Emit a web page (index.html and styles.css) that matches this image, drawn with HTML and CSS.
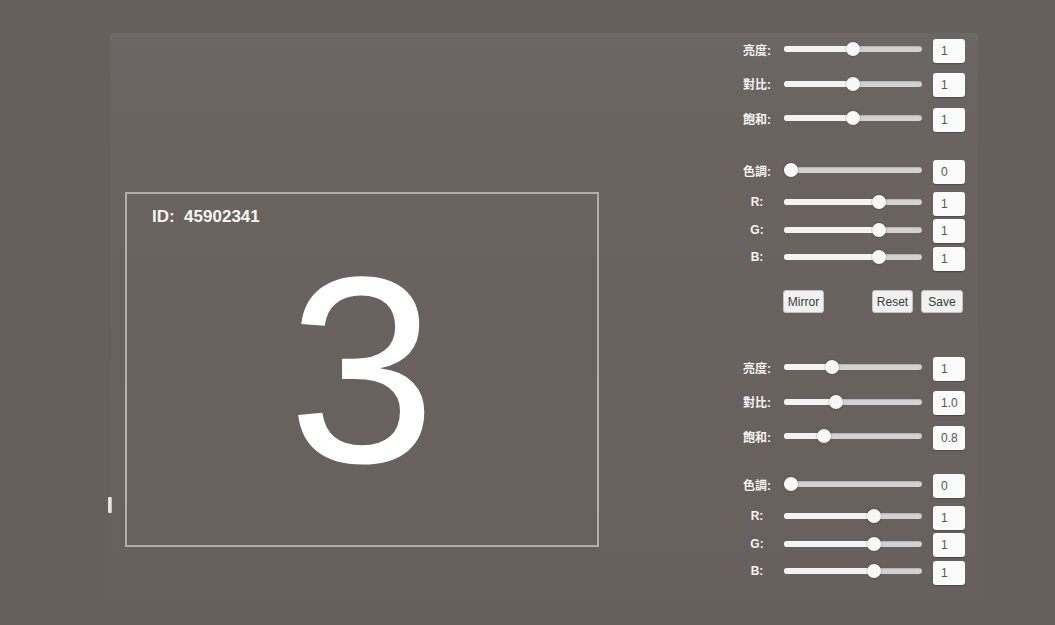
FILE: index.html
```html
<!DOCTYPE html>
<html lang="zh-Hant">
<head>
<meta charset="utf-8">
<title>Camera Adjust</title>
<link rel="stylesheet" href="styles.css">
</head>
<body>
<div class="panel">
  <span class="mark"></span>
  <div class="viewer">
    <div class="frame">
      <div class="id">ID:&nbsp;&nbsp;45902341</div>
      <div class="digit">3</div>
    </div>
  </div>
  <div class="controls">
    <div class="section">
      <div class="group basic">
        <div class="row"><span class="label">亮度:</span><div class="slider"><div class="fill" style="width:69px"></div><div class="thumb" style="left:69px"></div></div><div class="value">1</div></div>
        <div class="row"><span class="label">對比:</span><div class="slider"><div class="fill" style="width:69px"></div><div class="thumb" style="left:69px"></div></div><div class="value">1</div></div>
        <div class="row"><span class="label">飽和:</span><div class="slider"><div class="fill" style="width:69px"></div><div class="thumb" style="left:69px"></div></div><div class="value">1</div></div>
      </div>
      <div class="group hue">
        <div class="row"><span class="label">色調:</span><div class="slider"><div class="fill" style="width:7px"></div><div class="thumb" style="left:7px"></div></div><div class="value">0</div></div>
      </div>
      <div class="group rgb">
        <div class="row"><span class="label">R:</span><div class="slider"><div class="fill" style="width:95px"></div><div class="thumb" style="left:95px"></div></div><div class="value">1</div></div>
        <div class="row"><span class="label">G:</span><div class="slider"><div class="fill" style="width:95px"></div><div class="thumb" style="left:95px"></div></div><div class="value">1</div></div>
        <div class="row"><span class="label">B:</span><div class="slider"><div class="fill" style="width:95px"></div><div class="thumb" style="left:95px"></div></div><div class="value">1</div></div>
      </div>
      <div class="buttons">
        <button class="btn">Mirror</button>
        <button class="btn push">Reset</button>
        <button class="btn save">Save</button>
      </div>
    </div>
    <div class="section second">
      <div class="group basic">
        <div class="row"><span class="label">亮度:</span><div class="slider"><div class="fill" style="width:48px"></div><div class="thumb" style="left:48px"></div></div><div class="value">1</div></div>
        <div class="row"><span class="label">對比:</span><div class="slider"><div class="fill" style="width:52px"></div><div class="thumb" style="left:52px"></div></div><div class="value">1.0</div></div>
        <div class="row"><span class="label">飽和:</span><div class="slider"><div class="fill" style="width:40px"></div><div class="thumb" style="left:40px"></div></div><div class="value">0.8</div></div>
      </div>
      <div class="group hue tight">
        <div class="row"><span class="label">色調:</span><div class="slider"><div class="fill" style="width:7px"></div><div class="thumb" style="left:7px"></div></div><div class="value">0</div></div>
      </div>
      <div class="group rgb">
        <div class="row"><span class="label">R:</span><div class="slider"><div class="fill" style="width:90px"></div><div class="thumb" style="left:90px"></div></div><div class="value">1</div></div>
        <div class="row"><span class="label">G:</span><div class="slider"><div class="fill" style="width:90px"></div><div class="thumb" style="left:90px"></div></div><div class="value">1</div></div>
        <div class="row"><span class="label">B:</span><div class="slider"><div class="fill" style="width:90px"></div><div class="thumb" style="left:90px"></div></div><div class="value">1</div></div>
      </div>
    </div>
  </div>
</div>
</body>
</html>
```
FILE: styles.css
```css
html, body {
  margin: 0;
  padding: 0;
}

body {
  background: #675f5a;
  width: 1055px;
  height: 625px;
  overflow: hidden;
  font-family: "Liberation Sans", "Noto Sans CJK TC", sans-serif;
}

.panel {
  position: relative;
  box-sizing: border-box;
  margin: 33px 0 0 110px;
  width: 868px;
  height: 567px;
  padding-right: 13px;
  display: flex;
  background: linear-gradient(to bottom, #6c6764 0%, #6a6360 18%, #68605c 100%);
}

.mark {
  position: absolute;
  left: -2px;
  top: 464px;
  width: 4px;
  height: 16px;
  border-radius: 1px;
  background: linear-gradient(to right, #d8d4d2, #f4f2f1 50%, #b9b4b1);
}

.viewer {
  padding: 159px 0 0 15px;
}

.frame {
  box-sizing: border-box;
  width: 474px;
  height: 355px;
  border: 2px solid #b4aeab;
  display: grid;
  grid-template: "cell" 1fr / 1fr;
}

.id {
  grid-area: cell;
  align-self: start;
  padding: 13px 0 0 25px;
  font-size: 17px;
  line-height: 20px;
  font-weight: bold;
  color: #f6f6f6;
}

.digit {
  grid-area: cell;
  place-self: center;
  font-size: 266px;
  line-height: 1;
  color: #ffffff;
}

.controls {
  margin-left: auto;
  width: 225px;
  padding-top: 4px;
  display: flex;
  flex-direction: column;
}

.section {
  display: flex;
  flex-direction: column;
}

.section.second {
  margin-top: 42px;
}

.group {
  display: flex;
  flex-direction: column;
}

.group.basic {
  gap: 10.5px;
}

.group.hue {
  margin-top: 28px;
}

.group.hue.tight {
  margin-top: 24px;
}

.group.rgb {
  margin-top: 8px;
  gap: 3.5px;
}

.row {
  display: flex;
  align-items: center;
  height: 24px;
}

.label {
  width: 34px;
  text-align: center;
  font-size: 12px;
  font-weight: bold;
  color: #f4f4f4;
  white-space: nowrap;
}

.slider {
  position: relative;
  margin-left: 10px;
  width: 138px;
  height: 6px;
  border-radius: 3px;
  background: #d2d2d2;
  box-shadow: inset 0 1px 1px rgba(0, 0, 0, 0.15);
}

.fill {
  height: 100%;
  border-radius: 3px;
  background: #f3f3f3;
}

.thumb {
  position: absolute;
  top: 50%;
  width: 14px;
  height: 14px;
  margin: -7px 0 0 -7px;
  border-radius: 50%;
  background: #f8f8f8;
  box-shadow: 0 0 2px rgba(0, 0, 0, 0.4);
}

.value {
  box-sizing: border-box;
  margin: 3px 0 0 11px;
  width: 32px;
  height: 24px;
  padding-left: 8px;
  border-radius: 3px;
  background: #fbfbfb;
  box-shadow: 0 1px 1px rgba(0, 0, 0, 0.25);
  font-size: 12px;
  line-height: 24px;
  color: #555555;
}

.buttons {
  display: flex;
  align-items: center;
  margin-top: 21px;
  padding: 0 2px 0 43px;
  gap: 8px;
}

.btn {
  box-sizing: border-box;
  width: 41px;
  height: 23px;
  padding: 0;
  border: 1px solid #c4c4c4;
  border-radius: 3px;
  background: #f1f1f1;
  font-family: "Liberation Sans", sans-serif;
  font-size: 12px;
  color: #3a3a3a;
}

.btn.push {
  margin-left: auto;
}

.btn.save {
  width: 42px;
}
```
